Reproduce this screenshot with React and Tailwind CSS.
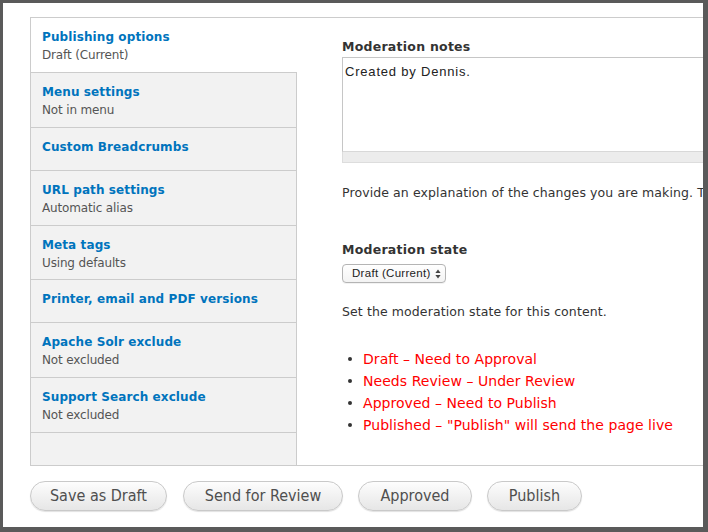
import React from "react";

const tabs = [
  { title: "Publishing options", sub: "Draft (Current)", h: "h-[55px]", selected: true },
  { title: "Menu settings", sub: "Not in menu", h: "h-[55px]" },
  { title: "Custom Breadcrumbs", h: "h-[43px]" },
  { title: "URL path settings", sub: "Automatic alias", h: "h-[55px]" },
  { title: "Meta tags", sub: "Using defaults", h: "h-[54px]" },
  { title: "Printer, email and PDF versions", h: "h-[43px]" },
  { title: "Apache Solr exclude", sub: "Not excluded", h: "h-[55px]" },
  { title: "Support Search exclude", sub: "Not excluded", h: "h-[55px]" },
];

const states = [
  "Draft – Need to Approval",
  "Needs Review – Under Review",
  "Approved – Need to Publish",
  "Published – \"Publish\" will send the page live",
];

const buttons = [
  { label: "Save as Draft", w: "w-[137px]" },
  { label: "Send for Review", w: "w-[160px]" },
  { label: "Approved", w: "w-[114px]" },
  { label: "Publish", w: "w-[95px]" },
];

export default function App() {
  return (
    <div className="w-[708px] h-[532px] bg-[#5a5a5a] pt-[3px] pl-[3px] pr-[5px] pb-[5px] overflow-hidden" style={{ fontFamily: '"DejaVu Sans", sans-serif' }}>
      <div className="w-full h-full bg-white overflow-hidden pl-[27px] pt-[14px]">
        {/* vertical tabs */}
        <div className="flex w-[720px] h-[449px] border-t border-l border-b border-[#cccccc]">
          <div className="w-[266px] flex flex-col shrink-0 bg-[#f2f2f2]">
            {tabs.map((t) => (
              <div
                key={t.title}
                className={`${t.h} shrink-0 border-b border-[#cccccc] pl-[11px] pt-[10px] ${t.selected ? "bg-white" : "bg-[#f2f2f2] border-r"}`}
              >
                <div className="text-[12px] leading-[18px] font-bold text-[#0074bd] tracking-[0.1px] whitespace-nowrap">{t.title}</div>
                {t.sub && (
                  <div className="text-[12px] leading-[18px] text-[#555555] tracking-[-0.15px] whitespace-nowrap">{t.sub}</div>
                )}
              </div>
            ))}
            <div className="flex-1 border-r border-[#cccccc]" />
          </div>
          <div className="flex-1 pl-[45px] pt-[20px] text-[#333333]">
            <div className="text-[12.5px] leading-[18px] font-bold tracking-[0.25px] text-[#333333] mb-[1px]">Moderation notes</div>
            <div className="w-[420px]">
              <textarea
                readOnly
                defaultValue="Created by Dennis."
                className="block w-full h-[95px] border border-[#c6c6c6] border-b-[#d8d8d8] resize-none outline-none pl-[2px] pt-[5px] text-[13px] leading-[18px] tracking-[0.8px] text-[#222222]"
                style={{ fontFamily: '"Liberation Sans", Arial, sans-serif' }}
              />
              <div className="h-[11px] bg-[#ececec] border-l border-r border-b border-[#dddddd]" />
            </div>
            <div className="mt-[21px] text-[12.5px] leading-[18px] tracking-[0.1px] whitespace-nowrap">
              Provide an explanation of the changes you are making. This will help other authors understand your motivations.
            </div>
            <div className="mt-[39px] text-[12.5px] leading-[18px] font-bold tracking-[0.25px]">Moderation state</div>
            <div className="mt-[5px] w-[104px] h-[19px] border border-[#b4b4b4] rounded-[4px] bg-gradient-to-b from-white to-[#f3f3f3] shadow-[0_1px_0_rgba(0,0,0,0.05)] flex items-center pl-[9px] pr-[4px]">
              <span className="flex-1 text-[11.5px] leading-[17px] text-[#222222] tracking-[0.3px] whitespace-nowrap" style={{ fontFamily: '"Liberation Sans", Arial, sans-serif' }}>
                Draft (Current)
              </span>
              <svg width="6" height="10" viewBox="0 0 6 10" className="shrink-0">
                <path d="M3 0.5 L5.6 4 L0.4 4 Z" fill="#444" />
                <path d="M3 9.5 L5.6 6 L0.4 6 Z" fill="#444" />
              </svg>
            </div>
            <div className="mt-[20px] text-[12.5px] leading-[18px] tracking-[0.1px] whitespace-nowrap">Set the moderation state for this content.</div>
            <ul className="mt-[27px]">
              {states.map((s) => (
                <li key={s} className="flex items-center h-[22px] text-[14px] tracking-[0.05px] text-[#ff0000] whitespace-nowrap">
                  <span className="w-[4px] h-[4px] rounded-full bg-[#333333] ml-[6px] mr-[11px]" />
                  {s}
                </li>
              ))}
            </ul>
          </div>
        </div>
        {/* buttons */}
        <div className="flex gap-[15px] mt-[15px]">
          {buttons.map((b, i) => (
            <button
              key={b.label}
              className={`${b.w} ${i === 1 ? "ml-[1px]" : ""} h-[30px] rounded-full border border-[#c9c9c9] bg-gradient-to-b from-[#fdfdfd] to-[#e6e6e6] shadow-[0_1px_1px_rgba(0,0,0,0.12)] text-[16px] text-[#4f4f4f] flex items-center justify-center`}
              style={{ fontFamily: '"DejaVu Sans Condensed", "DejaVu Sans", sans-serif' }}
            >
              {b.label}
            </button>
          ))}
        </div>
      </div>
    </div>
  );
}
